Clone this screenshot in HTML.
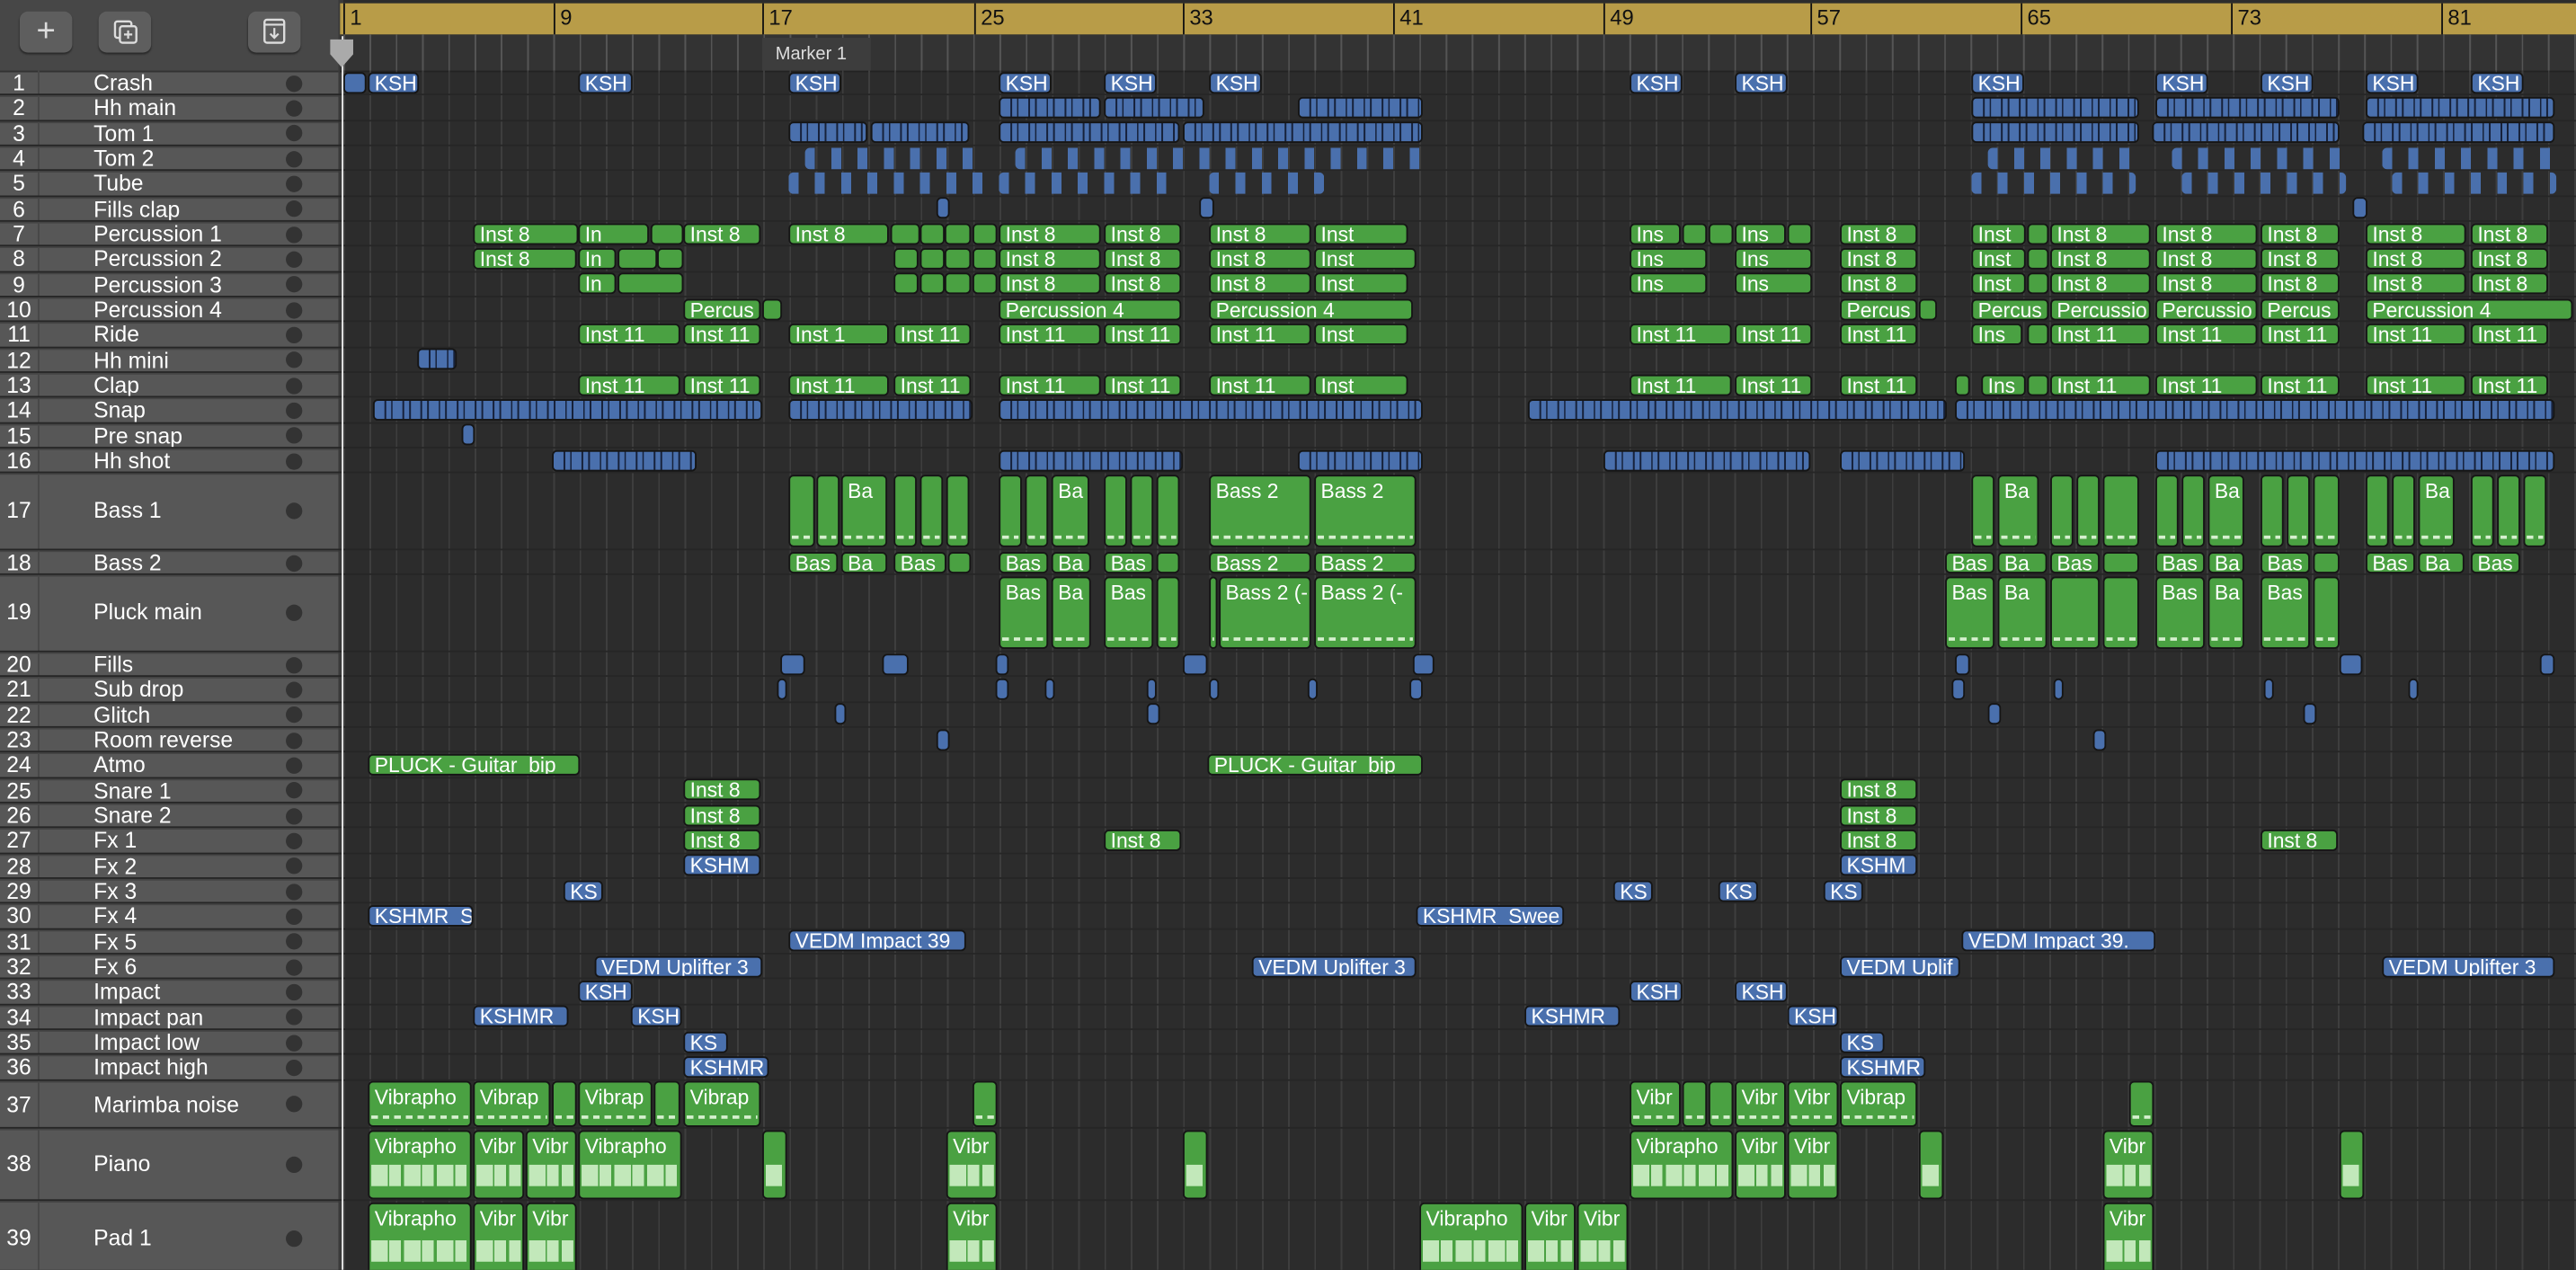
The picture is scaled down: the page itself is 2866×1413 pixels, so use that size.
<!DOCTYPE html>
<html><head><meta charset="utf-8"><style>
html,body{margin:0;padding:0;background:#2c2c2c;width:2866px;height:1412px;overflow:hidden}
#w{position:absolute;left:0;top:0;width:1568px;height:773px;transform:scale(1.82781);transform-origin:0 0;font-family:"Liberation Sans",sans-serif;overflow:hidden;background:#2c2c2c}
#lp{position:absolute;left:0;top:0;width:206px;height:773px;background:#575757}
#hd{position:absolute;left:0;top:0;width:206px;height:43px;background:#474747;border-bottom:1px solid #333}
.btn{position:absolute;top:7px;width:32px;height:25px;background:#5e5e5e;border-radius:5px;box-shadow:0 1px 1px #2a2a2a;color:#ddd;text-align:center}
.tr{position:absolute;left:0;width:206px;border-bottom:1.5px solid #444;color:#fff;font-size:13.5px}
.tr .n{position:absolute;left:0;width:23px;text-align:center;border-right:1.5px solid #474747;height:100%}
.tr .t{position:absolute;left:57px}
.tr .d{position:absolute;left:174px;width:10px;height:10px;border-radius:50%;background:#333}
#ta{position:absolute;left:209px;top:43px;width:1359px;height:730px;background:repeating-linear-gradient(90deg,#3e3e3e 0 1px,transparent 1px 15.975px)}
#ruler{position:absolute;left:207px;top:2px;width:1361px;height:19px;background:#b89c48;border-bottom:1px solid #222}
.bn{position:absolute;top:0;height:19px;border-left:1px solid #111;font-size:13px;color:#111;padding-left:3px;line-height:17px}
#mk{position:absolute;left:207px;top:21px;width:1361px;height:22px;background:#333 repeating-linear-gradient(90deg,#555 0 1px,transparent 1px 15.975px);background-position:2px 0;border-bottom:1px solid #222}
.row{position:absolute;left:0;width:1568px;border-bottom:1px solid #262626;box-sizing:border-box}
.row i{position:absolute;top:0.5px;bottom:0.5px;font-style:normal;background:#4aa142;border:1px solid #151515;border-radius:3px;box-sizing:border-box;color:#fff;font-size:12.5px;line-height:12px;padding-left:3px;white-space:nowrap;overflow:hidden}
.B i{background:#4a70ad}
.S i{background:repeating-linear-gradient(90deg,#4a70ad 0 6px,#16213a 6px 7px,#4a70ad 7px 10px,#16213a 10px 11px)}
.T i{background:repeating-linear-gradient(90deg,#4a70ad 0 6px,transparent 6px 16px);border:none}
.tall i{line-height:15px;padding-top:2px}
.N i::after{content:"";position:absolute;left:1px;right:1px;bottom:4px;height:2px;background:repeating-linear-gradient(90deg,#d6f0cf 0 4px,transparent 4px 7px)}
.P i::after{content:"";position:absolute;left:1px;right:1px;bottom:7px;height:13px;background:repeating-linear-gradient(90deg,#c8ecc0 0 10px,transparent 10px 11px,#c8ecc0 11px 18px,transparent 18px 20px);opacity:.95}
</style></head><body><div id="w">
<div id="lp">
<div id="hd">
<div class="btn" style="left:12px;font-size:20px;line-height:24px">+</div>
<div class="btn" style="left:60px"><svg width="32" height="25"><rect x="10" y="6" width="10" height="10" rx="1.5" fill="none" stroke="#ddd" stroke-width="1.3"/><rect x="13" y="9" width="10" height="10" rx="1.5" fill="#5e5e5e" stroke="#ddd" stroke-width="1.3"/><path d="M18 11.5v5M15.5 14h5" stroke="#ddd" stroke-width="1.2"/></svg></div>
<div class="btn" style="left:151px"><svg width="32" height="25"><rect x="10" y="5" width="12" height="14" rx="1.5" fill="none" stroke="#ddd" stroke-width="1.3"/><path d="M10 8h12M16 10v6M13.5 13.5l2.5 2.5 2.5-2.5" stroke="#ddd" stroke-width="1.2" fill="none"/></svg></div>
</div>
<div class="tr" style="top:43px;height:15.3px;line-height:15.3px"><span class="n">1</span><span class="t">Crash</span><span class="d" style="top:2.6px"></span></div>
<div class="tr" style="top:58.3px;height:15.3px;line-height:15.3px"><span class="n">2</span><span class="t">Hh main</span><span class="d" style="top:2.6px"></span></div>
<div class="tr" style="top:73.7px;height:15.3px;line-height:15.3px"><span class="n">3</span><span class="t">Tom 1</span><span class="d" style="top:2.6px"></span></div>
<div class="tr" style="top:89px;height:15.3px;line-height:15.3px"><span class="n">4</span><span class="t">Tom 2</span><span class="d" style="top:2.6px"></span></div>
<div class="tr" style="top:104.3px;height:15.3px;line-height:15.3px"><span class="n">5</span><span class="t">Tube</span><span class="d" style="top:2.6px"></span></div>
<div class="tr" style="top:119.7px;height:15.3px;line-height:15.3px"><span class="n">6</span><span class="t">Fills clap</span><span class="d" style="top:2.6px"></span></div>
<div class="tr" style="top:135px;height:15.3px;line-height:15.3px"><span class="n">7</span><span class="t">Percussion 1</span><span class="d" style="top:2.6px"></span></div>
<div class="tr" style="top:150.3px;height:15.3px;line-height:15.3px"><span class="n">8</span><span class="t">Percussion 2</span><span class="d" style="top:2.6px"></span></div>
<div class="tr" style="top:165.7px;height:15.3px;line-height:15.3px"><span class="n">9</span><span class="t">Percussion 3</span><span class="d" style="top:2.6px"></span></div>
<div class="tr" style="top:181px;height:15.3px;line-height:15.3px"><span class="n">10</span><span class="t">Percussion 4</span><span class="d" style="top:2.6px"></span></div>
<div class="tr" style="top:196.3px;height:15.3px;line-height:15.3px"><span class="n">11</span><span class="t">Ride</span><span class="d" style="top:2.6px"></span></div>
<div class="tr" style="top:211.7px;height:15.3px;line-height:15.3px"><span class="n">12</span><span class="t">Hh mini</span><span class="d" style="top:2.6px"></span></div>
<div class="tr" style="top:227px;height:15.3px;line-height:15.3px"><span class="n">13</span><span class="t">Clap</span><span class="d" style="top:2.6px"></span></div>
<div class="tr" style="top:242.3px;height:15.3px;line-height:15.3px"><span class="n">14</span><span class="t">Snap</span><span class="d" style="top:2.6px"></span></div>
<div class="tr" style="top:257.7px;height:15.3px;line-height:15.3px"><span class="n">15</span><span class="t">Pre snap</span><span class="d" style="top:2.6px"></span></div>
<div class="tr" style="top:273px;height:15.3px;line-height:15.3px"><span class="n">16</span><span class="t">Hh shot</span><span class="d" style="top:2.6px"></span></div>
<div class="tr" style="top:288.3px;height:46.7px;line-height:46.7px"><span class="n">17</span><span class="t">Bass 1</span><span class="d" style="top:18px"></span></div>
<div class="tr" style="top:335px;height:15.3px;line-height:15.3px"><span class="n">18</span><span class="t">Bass 2</span><span class="d" style="top:2.6px"></span></div>
<div class="tr" style="top:350.3px;height:46.7px;line-height:46.7px"><span class="n">19</span><span class="t">Pluck main</span><span class="d" style="top:18px"></span></div>
<div class="tr" style="top:397px;height:15.3px;line-height:15.3px"><span class="n">20</span><span class="t">Fills</span><span class="d" style="top:2.6px"></span></div>
<div class="tr" style="top:412.3px;height:15.3px;line-height:15.3px"><span class="n">21</span><span class="t">Sub drop</span><span class="d" style="top:2.6px"></span></div>
<div class="tr" style="top:427.7px;height:15.3px;line-height:15.3px"><span class="n">22</span><span class="t">Glitch</span><span class="d" style="top:2.6px"></span></div>
<div class="tr" style="top:443px;height:15.3px;line-height:15.3px"><span class="n">23</span><span class="t">Room reverse</span><span class="d" style="top:2.6px"></span></div>
<div class="tr" style="top:458.3px;height:15.3px;line-height:15.3px"><span class="n">24</span><span class="t">Atmo</span><span class="d" style="top:2.6px"></span></div>
<div class="tr" style="top:473.7px;height:15.3px;line-height:15.3px"><span class="n">25</span><span class="t">Snare 1</span><span class="d" style="top:2.6px"></span></div>
<div class="tr" style="top:489px;height:15.3px;line-height:15.3px"><span class="n">26</span><span class="t">Snare 2</span><span class="d" style="top:2.6px"></span></div>
<div class="tr" style="top:504.3px;height:15.3px;line-height:15.3px"><span class="n">27</span><span class="t">Fx 1</span><span class="d" style="top:2.6px"></span></div>
<div class="tr" style="top:519.7px;height:15.3px;line-height:15.3px"><span class="n">28</span><span class="t">Fx 2</span><span class="d" style="top:2.6px"></span></div>
<div class="tr" style="top:535px;height:15.3px;line-height:15.3px"><span class="n">29</span><span class="t">Fx 3</span><span class="d" style="top:2.6px"></span></div>
<div class="tr" style="top:550.3px;height:15.3px;line-height:15.3px"><span class="n">30</span><span class="t">Fx 4</span><span class="d" style="top:2.6px"></span></div>
<div class="tr" style="top:565.7px;height:15.3px;line-height:15.3px"><span class="n">31</span><span class="t">Fx 5</span><span class="d" style="top:2.6px"></span></div>
<div class="tr" style="top:581px;height:15.3px;line-height:15.3px"><span class="n">32</span><span class="t">Fx 6</span><span class="d" style="top:2.6px"></span></div>
<div class="tr" style="top:596.3px;height:15.3px;line-height:15.3px"><span class="n">33</span><span class="t">Impact</span><span class="d" style="top:2.6px"></span></div>
<div class="tr" style="top:611.7px;height:15.3px;line-height:15.3px"><span class="n">34</span><span class="t">Impact pan</span><span class="d" style="top:2.6px"></span></div>
<div class="tr" style="top:627px;height:15.3px;line-height:15.3px"><span class="n">35</span><span class="t">Impact low</span><span class="d" style="top:2.6px"></span></div>
<div class="tr" style="top:642.3px;height:15.3px;line-height:15.3px"><span class="n">36</span><span class="t">Impact high</span><span class="d" style="top:2.6px"></span></div>
<div class="tr" style="top:657.7px;height:29.5px;line-height:29.5px"><span class="n">37</span><span class="t">Marimba noise</span><span class="d" style="top:9.7px"></span></div>
<div class="tr" style="top:687.2px;height:44px;line-height:44px"><span class="n">38</span><span class="t">Piano</span><span class="d" style="top:17px"></span></div>
<div class="tr" style="top:731.2px;height:46px;line-height:46px"><span class="n">39</span><span class="t">Pad 1</span><span class="d" style="top:18px"></span></div>
</div>
<div style="position:absolute;left:206px;top:0;width:3px;height:773px;background:#3a3a3a"></div>
<div id="ruler">
<span class="bn" style="left:2px">1</span><span class="bn" style="left:130px">9</span><span class="bn" style="left:257px">17</span><span class="bn" style="left:386px">25</span><span class="bn" style="left:513px">33</span><span class="bn" style="left:641px">41</span><span class="bn" style="left:769px">49</span><span class="bn" style="left:895px">57</span><span class="bn" style="left:1023px">65</span><span class="bn" style="left:1151px">73</span><span class="bn" style="left:1279px">81</span>
</div>
<div id="mk"><div style="position:absolute;left:257px;top:2px;width:66px;height:20px;background:#3d3d3d;color:#ddd;font-size:11px;line-height:20px;padding-left:8px;box-sizing:border-box">Marker 1</div></div>
<div id="ta"></div>
<div style="position:absolute;left:208px;top:22px;width:1px;height:751px;background:#eee;z-index:5"></div>
<svg style="position:absolute;left:199px;top:22px;z-index:6" width="18" height="20"><path d="M2 2h14v9l-7 8l-7-8z" fill="#aaa"/></svg>

<div class="row B" style="top:43px;height:15.3px"><i style="left:209px;width:14px"></i><i style="left:224px;width:31px">KSH</i><i style="left:352px;width:33px">KSH</i><i style="left:480px;width:32px">KSH</i><i style="left:608px;width:32px">KSH</i><i style="left:672px;width:32px">KSH</i><i style="left:736px;width:32px">KSH</i><i style="left:992px;width:32px">KSH</i><i style="left:1056px;width:32px">KSH</i><i style="left:1200px;width:32px">KSH</i><i style="left:1312px;width:32px">KSH</i><i style="left:1376px;width:32px">KSH</i><i style="left:1440px;width:32px">KSH</i><i style="left:1504px;width:32px">KSH</i></div>
<div class="row S" style="top:58.3px;height:15.3px"><i style="left:608px;width:62px"></i><i style="left:672px;width:61px"></i><i style="left:790px;width:76px"></i><i style="left:1200px;width:102px"></i><i style="left:1312px;width:112px"></i><i style="left:1440px;width:115px"></i></div>
<div class="row S" style="top:73.7px;height:15.3px"><i style="left:480px;width:48px"></i><i style="left:530px;width:60px"></i><i style="left:608px;width:110px"></i><i style="left:720px;width:146px"></i><i style="left:1200px;width:102px"></i><i style="left:1310px;width:114px"></i><i style="left:1438px;width:117px"></i></div>
<div class="row T" style="top:89px;height:15.3px"><i style="left:490px;width:110px"></i><i style="left:618px;width:250px"></i><i style="left:1210px;width:92px"></i><i style="left:1322px;width:104px"></i><i style="left:1450px;width:108px"></i></div>
<div class="row T" style="top:104.3px;height:15.3px"><i style="left:480px;width:120px"></i><i style="left:608px;width:110px"></i><i style="left:736px;width:70px"></i><i style="left:1200px;width:100px"></i><i style="left:1328px;width:100px"></i><i style="left:1456px;width:100px"></i></div>
<div class="row B" style="top:119.7px;height:15.3px"><i style="left:570px;width:8px"></i><i style="left:730px;width:9px"></i><i style="left:1432px;width:9px"></i></div>
<div class="row" style="top:135px;height:15.3px"><i style="left:288px;width:64px">Inst 8</i><i style="left:352px;width:43px">In</i><i style="left:396px;width:20px"></i><i style="left:416px;width:47px">Inst 8</i><i style="left:480px;width:61px">Inst 8</i><i style="left:542px;width:18px"></i><i style="left:560px;width:15px"></i><i style="left:575px;width:16px"></i><i style="left:592px;width:15px"></i><i style="left:608px;width:62px">Inst 8</i><i style="left:672px;width:47px">Inst 8</i><i style="left:736px;width:62px">Inst 8</i><i style="left:800px;width:57px">Inst</i><i style="left:992px;width:31px">Ins</i><i style="left:1024px;width:15px"></i><i style="left:1040px;width:15px"></i><i style="left:1056px;width:31px">Ins</i><i style="left:1088px;width:15px"></i><i style="left:1120px;width:47px">Inst 8</i><i style="left:1200px;width:33px">Inst</i><i style="left:1234px;width:13px"></i><i style="left:1248px;width:61px">Inst 8</i><i style="left:1312px;width:62px">Inst 8</i><i style="left:1376px;width:48px">Inst 8</i><i style="left:1440px;width:61px">Inst 8</i><i style="left:1504px;width:47px">Inst 8</i></div>
<div class="row" style="top:150.3px;height:15.3px"><i style="left:288px;width:63px">Inst 8</i><i style="left:352px;width:23px">In</i><i style="left:376px;width:24px"></i><i style="left:400px;width:16px"></i><i style="left:544px;width:15px"></i><i style="left:560px;width:15px"></i><i style="left:575px;width:16px"></i><i style="left:592px;width:15px"></i><i style="left:608px;width:62px">Inst 8</i><i style="left:672px;width:47px">Inst 8</i><i style="left:736px;width:62px">Inst 8</i><i style="left:800px;width:62px">Inst</i><i style="left:992px;width:47px">Ins</i><i style="left:1056px;width:47px">Ins</i><i style="left:1120px;width:47px">Inst 8</i><i style="left:1200px;width:33px">Inst</i><i style="left:1234px;width:13px"></i><i style="left:1248px;width:61px">Inst 8</i><i style="left:1312px;width:62px">Inst 8</i><i style="left:1376px;width:48px">Inst 8</i><i style="left:1440px;width:61px">Inst 8</i><i style="left:1504px;width:47px">Inst 8</i></div>
<div class="row" style="top:165.7px;height:15.3px"><i style="left:352px;width:23px">In</i><i style="left:376px;width:40px"></i><i style="left:544px;width:15px"></i><i style="left:560px;width:15px"></i><i style="left:575px;width:16px"></i><i style="left:592px;width:15px"></i><i style="left:608px;width:62px">Inst 8</i><i style="left:672px;width:47px">Inst 8</i><i style="left:736px;width:62px">Inst 8</i><i style="left:800px;width:57px">Inst</i><i style="left:992px;width:47px">Ins</i><i style="left:1056px;width:47px">Ins</i><i style="left:1120px;width:47px">Inst 8</i><i style="left:1200px;width:33px">Inst</i><i style="left:1234px;width:13px"></i><i style="left:1248px;width:61px">Inst 8</i><i style="left:1312px;width:62px">Inst 8</i><i style="left:1376px;width:48px">Inst 8</i><i style="left:1440px;width:61px">Inst 8</i><i style="left:1504px;width:47px">Inst 8</i></div>
<div class="row" style="top:181px;height:15.3px"><i style="left:416px;width:47px">Percus</i><i style="left:464px;width:12px"></i><i style="left:608px;width:111px">Percussion 4</i><i style="left:736px;width:124px">Percussion 4</i><i style="left:1120px;width:47px">Percus</i><i style="left:1168px;width:11px"></i><i style="left:1200px;width:47px">Percus</i><i style="left:1248px;width:61px">Percussio</i><i style="left:1312px;width:62px">Percussio</i><i style="left:1376px;width:48px">Percus</i><i style="left:1440px;width:126px">Percussion 4</i></div>
<div class="row" style="top:196.3px;height:15.3px"><i style="left:352px;width:62px">Inst 11</i><i style="left:416px;width:47px">Inst 11</i><i style="left:480px;width:61px">Inst 1</i><i style="left:544px;width:47px">Inst 11</i><i style="left:608px;width:62px">Inst 11</i><i style="left:672px;width:47px">Inst 11</i><i style="left:736px;width:62px">Inst 11</i><i style="left:800px;width:57px">Inst</i><i style="left:992px;width:62px">Inst 11</i><i style="left:1056px;width:47px">Inst 11</i><i style="left:1120px;width:47px">Inst 11</i><i style="left:1200px;width:31px">Ins</i><i style="left:1234px;width:13px"></i><i style="left:1248px;width:61px">Inst 11</i><i style="left:1312px;width:62px">Inst 11</i><i style="left:1376px;width:48px">Inst 11</i><i style="left:1440px;width:61px">Inst 11</i><i style="left:1504px;width:47px">Inst 11</i></div>
<div class="row S" style="top:211.7px;height:15.3px"><i style="left:254px;width:24px"></i></div>
<div class="row" style="top:227px;height:15.3px"><i style="left:352px;width:62px">Inst 11</i><i style="left:416px;width:47px">Inst 11</i><i style="left:480px;width:61px">Inst 11</i><i style="left:544px;width:47px">Inst 11</i><i style="left:608px;width:62px">Inst 11</i><i style="left:672px;width:47px">Inst 11</i><i style="left:736px;width:62px">Inst 11</i><i style="left:800px;width:57px">Inst</i><i style="left:992px;width:62px">Inst 11</i><i style="left:1056px;width:47px">Inst 11</i><i style="left:1120px;width:47px">Inst 11</i><i style="left:1190px;width:9px"></i><i style="left:1206px;width:27px">Ins</i><i style="left:1234px;width:13px"></i><i style="left:1248px;width:61px">Inst 11</i><i style="left:1312px;width:62px">Inst 11</i><i style="left:1376px;width:48px">Inst 11</i><i style="left:1440px;width:61px">Inst 11</i><i style="left:1504px;width:47px">Inst 11</i></div>
<div class="row S" style="top:242.3px;height:15.3px"><i style="left:227px;width:237px"></i><i style="left:480px;width:112px"></i><i style="left:608px;width:258px"></i><i style="left:930px;width:255px"></i><i style="left:1190px;width:365px"></i></div>
<div class="row B" style="top:257.7px;height:15.3px"><i style="left:281px;width:8px"></i></div>
<div class="row S" style="top:273px;height:15.3px"><i style="left:336px;width:88px"></i><i style="left:608px;width:112px"></i><i style="left:790px;width:76px"></i><i style="left:976px;width:126px"></i><i style="left:1120px;width:76px"></i><i style="left:1312px;width:243px"></i></div>
<div class="row tall N" style="top:288.3px;height:46.7px"><i style="left:480px;width:16px"></i><i style="left:497px;width:14px"></i><i style="left:512px;width:28px">Ba</i><i style="left:544px;width:14px"></i><i style="left:560px;width:14px"></i><i style="left:576px;width:14px"></i><i style="left:608px;width:14px"></i><i style="left:624px;width:14px"></i><i style="left:640px;width:23px">Ba</i><i style="left:672px;width:14px"></i><i style="left:688px;width:14px"></i><i style="left:704px;width:14px"></i><i style="left:736px;width:62px">Bass 2</i><i style="left:800px;width:62px">Bass 2</i><i style="left:1200px;width:14px"></i><i style="left:1216px;width:25px">Ba</i><i style="left:1248px;width:14px"></i><i style="left:1264px;width:14px"></i><i style="left:1280px;width:22px"></i><i style="left:1312px;width:14px"></i><i style="left:1328px;width:14px"></i><i style="left:1344px;width:22px">Ba</i><i style="left:1376px;width:14px"></i><i style="left:1392px;width:14px"></i><i style="left:1408px;width:16px"></i><i style="left:1440px;width:14px"></i><i style="left:1456px;width:14px"></i><i style="left:1472px;width:22px">Ba</i><i style="left:1504px;width:14px"></i><i style="left:1520px;width:14px"></i><i style="left:1536px;width:14px"></i></div>
<div class="row" style="top:335px;height:15.3px"><i style="left:480px;width:30px">Bas</i><i style="left:512px;width:28px">Ba</i><i style="left:544px;width:32px">Bas</i><i style="left:577px;width:14px"></i><i style="left:608px;width:30px">Bas</i><i style="left:640px;width:24px">Ba</i><i style="left:672px;width:30px">Bas</i><i style="left:704px;width:14px"></i><i style="left:736px;width:62px">Bass 2</i><i style="left:800px;width:62px">Bass 2</i><i style="left:1184px;width:30px">Bas</i><i style="left:1216px;width:30px">Ba</i><i style="left:1248px;width:30px">Bas</i><i style="left:1280px;width:22px"></i><i style="left:1312px;width:30px">Bas</i><i style="left:1344px;width:22px">Ba</i><i style="left:1376px;width:30px">Bas</i><i style="left:1408px;width:16px"></i><i style="left:1440px;width:30px">Bas</i><i style="left:1472px;width:28px">Ba</i><i style="left:1504px;width:30px">Bas</i></div>
<div class="row tall N" style="top:350.3px;height:46.7px"><i style="left:608px;width:30px">Bas</i><i style="left:640px;width:24px">Ba</i><i style="left:672px;width:30px">Bas</i><i style="left:704px;width:14px"></i><i style="left:736px;width:5px;padding:0"></i><i style="left:742px;width:56px">Bass 2 (-</i><i style="left:800px;width:62px">Bass 2 (-</i><i style="left:1184px;width:30px">Bas</i><i style="left:1216px;width:30px">Ba</i><i style="left:1248px;width:30px"></i><i style="left:1280px;width:22px"></i><i style="left:1312px;width:30px">Bas</i><i style="left:1344px;width:22px">Ba</i><i style="left:1376px;width:30px">Bas</i><i style="left:1408px;width:16px"></i></div>
<div class="row B" style="top:397px;height:15.3px"><i style="left:475px;width:15px"></i><i style="left:537px;width:16px"></i><i style="left:606px;width:8px"></i><i style="left:720px;width:15px"></i><i style="left:860px;width:13px"></i><i style="left:1190px;width:9px"></i><i style="left:1424px;width:14px"></i><i style="left:1546px;width:9px"></i></div>
<div class="row B" style="top:412.3px;height:15.3px"><i style="left:473px;width:6px"></i><i style="left:606px;width:8px"></i><i style="left:636px;width:6px"></i><i style="left:698px;width:6px"></i><i style="left:736px;width:6px"></i><i style="left:796px;width:6px"></i><i style="left:858px;width:8px"></i><i style="left:1188px;width:8px"></i><i style="left:1250px;width:6px"></i><i style="left:1378px;width:6px"></i><i style="left:1466px;width:6px"></i></div>
<div class="row B" style="top:427.7px;height:15.3px"><i style="left:508px;width:7px"></i><i style="left:698px;width:8px"></i><i style="left:1210px;width:8px"></i><i style="left:1402px;width:8px"></i></div>
<div class="row B" style="top:443px;height:15.3px"><i style="left:570px;width:8px"></i><i style="left:1274px;width:8px"></i></div>
<div class="row" style="top:458.3px;height:15.3px"><i style="left:224px;width:129px">PLUCK - Guitar_bip_</i><i style="left:735px;width:131px">PLUCK - Guitar_bip_</i></div>
<div class="row" style="top:473.7px;height:15.3px"><i style="left:416px;width:47px">Inst 8</i><i style="left:1120px;width:47px">Inst 8</i></div>
<div class="row" style="top:489px;height:15.3px"><i style="left:416px;width:47px">Inst 8</i><i style="left:1120px;width:47px">Inst 8</i></div>
<div class="row" style="top:504.3px;height:15.3px"><i style="left:416px;width:47px">Inst 8_</i><i style="left:672px;width:47px">Inst 8_</i><i style="left:1120px;width:47px">Inst 8</i><i style="left:1376px;width:47px">Inst 8_</i></div>
<div class="row B" style="top:519.7px;height:15.3px"><i style="left:416px;width:47px">KSHM</i><i style="left:1120px;width:47px">KSHM</i></div>
<div class="row B" style="top:535px;height:15.3px"><i style="left:343px;width:24px">KS</i><i style="left:982px;width:24px">KS</i><i style="left:1046px;width:24px">KS</i><i style="left:1110px;width:24px">KS</i></div>
<div class="row B" style="top:550.3px;height:15.3px"><i style="left:224px;width:64px">KSHMR_Swee</i><i style="left:862px;width:90px">KSHMR_Swee</i></div>
<div class="row B" style="top:565.7px;height:15.3px"><i style="left:480px;width:108px">VEDM Impact 39</i><i style="left:1194px;width:118px">VEDM Impact 39.</i></div>
<div class="row B" style="top:581px;height:15.3px"><i style="left:362px;width:102px">VEDM Uplifter 3</i><i style="left:762px;width:100px">VEDM Uplifter 3</i><i style="left:1120px;width:73px">VEDM Uplif</i><i style="left:1450px;width:105px">VEDM Uplifter 3</i></div>
<div class="row B" style="top:596.3px;height:15.3px"><i style="left:352px;width:33px">KSH</i><i style="left:992px;width:32px">KSH</i><i style="left:1056px;width:32px">KSH</i></div>
<div class="row B" style="top:611.7px;height:15.3px"><i style="left:288px;width:58px">KSHMR_</i><i style="left:384px;width:31px">KSH</i><i style="left:928px;width:58px">KSHMR_</i><i style="left:1088px;width:31px">KSH</i></div>
<div class="row B" style="top:627px;height:15.3px"><i style="left:416px;width:27px">KS</i><i style="left:1120px;width:27px">KS</i></div>
<div class="row B" style="top:642.3px;height:15.3px"><i style="left:416px;width:52px">KSHMR</i><i style="left:1120px;width:52px">KSHMR</i></div>
<div class="row tall N" style="top:657.7px;height:29.5px"><i style="left:224px;width:63px">Vibrapho</i><i style="left:288px;width:47px">Vibrap</i><i style="left:336px;width:15px"></i><i style="left:352px;width:45px">Vibrap</i><i style="left:398px;width:16px"></i><i style="left:416px;width:47px">Vibrap</i><i style="left:592px;width:15px"></i><i style="left:992px;width:31px">Vibr</i><i style="left:1024px;width:15px"></i><i style="left:1040px;width:15px"></i><i style="left:1056px;width:31px">Vibr</i><i style="left:1088px;width:31px">Vibr</i><i style="left:1120px;width:47px">Vibrap</i><i style="left:1296px;width:15px"></i></div>
<div class="row tall P" style="top:687.2px;height:44px"><i style="left:224px;width:63px">Vibrapho</i><i style="left:288px;width:31px">Vibr</i><i style="left:320px;width:31px">Vibr</i><i style="left:352px;width:63px">Vibrapho</i><i style="left:464px;width:15px"></i><i style="left:576px;width:31px">Vibr</i><i style="left:720px;width:15px"></i><i style="left:992px;width:63px">Vibrapho</i><i style="left:1056px;width:31px">Vibr</i><i style="left:1088px;width:31px">Vibr</i><i style="left:1168px;width:15px"></i><i style="left:1280px;width:31px">Vibr</i><i style="left:1424px;width:15px"></i></div>
<div class="row tall P" style="top:731.2px;height:46px"><i style="left:224px;width:63px">Vibrapho</i><i style="left:288px;width:31px">Vibr</i><i style="left:320px;width:31px">Vibr</i><i style="left:576px;width:31px">Vibr</i><i style="left:864px;width:63px">Vibrapho</i><i style="left:928px;width:31px">Vibr</i><i style="left:960px;width:31px">Vibr</i><i style="left:1280px;width:31px">Vibr</i></div>
</div></body></html>
